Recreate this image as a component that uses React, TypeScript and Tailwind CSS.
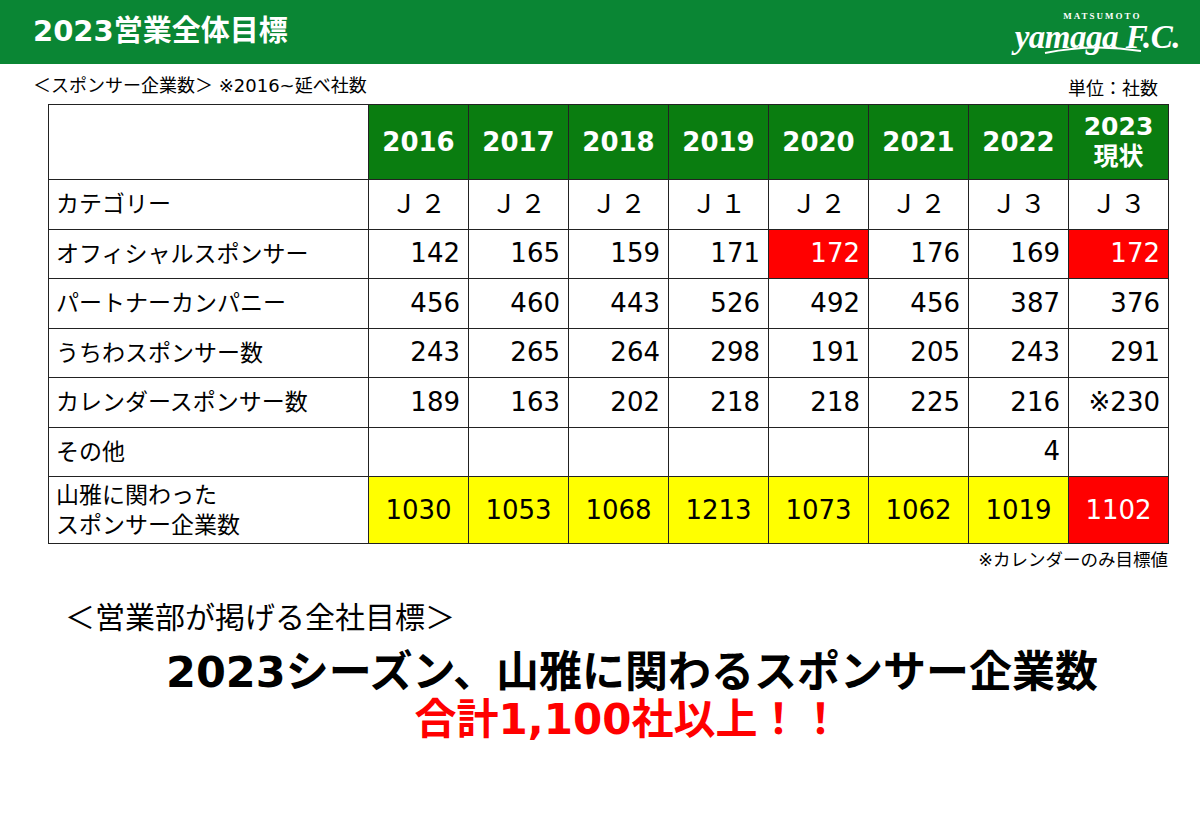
const FONT = '"DejaVu Sans","Noto Sans CJK JP",sans-serif';

type Cell = { v: string; tone?: 'red' | 'yellow' };

const YEARS = ['2016', '2017', '2018', '2019', '2020', '2021', '2022'];

const ROWS: { label: string[]; cells: Cell[]; align: 'right' | 'center'; tall?: boolean }[] = [
  {
    label: ['カテゴリー'],
    align: 'center',
    cells: ['Ｊ２', 'Ｊ２', 'Ｊ２', 'Ｊ１', 'Ｊ２', 'Ｊ２', 'Ｊ３', 'Ｊ３'].map((v) => ({ v })),
  },
  {
    label: ['オフィシャルスポンサー'],
    align: 'right',
    cells: [
      { v: '142' }, { v: '165' }, { v: '159' }, { v: '171' },
      { v: '172', tone: 'red' }, { v: '176' }, { v: '169' }, { v: '172', tone: 'red' },
    ],
  },
  {
    label: ['パートナーカンパニー'],
    align: 'right',
    cells: ['456', '460', '443', '526', '492', '456', '387', '376'].map((v) => ({ v })),
  },
  {
    label: ['うちわスポンサー数'],
    align: 'right',
    cells: ['243', '265', '264', '298', '191', '205', '243', '291'].map((v) => ({ v })),
  },
  {
    label: ['カレンダースポンサー数'],
    align: 'right',
    cells: ['189', '163', '202', '218', '218', '225', '216', '※230'].map((v) => ({ v })),
  },
  {
    label: ['その他'],
    align: 'right',
    cells: ['', '', '', '', '', '', '4', ''].map((v) => ({ v })),
  },
  {
    label: ['山雅に関わった', 'スポンサー企業数'],
    align: 'center',
    tall: true,
    cells: [
      { v: '1030', tone: 'yellow' }, { v: '1053', tone: 'yellow' }, { v: '1068', tone: 'yellow' },
      { v: '1213', tone: 'yellow' }, { v: '1073', tone: 'yellow' }, { v: '1062', tone: 'yellow' },
      { v: '1019', tone: 'yellow' }, { v: '1102', tone: 'red' },
    ],
  },
];

function Logo() {
  return (
    <div className="relative flex flex-col items-center text-white leading-none">
      <span
        className="text-[9px] leading-[10px] font-bold tracking-[2px] ml-[10px]"
        style={{ fontFamily: '"Liberation Serif",serif' }}
      >
        MATSUMOTO
      </span>
      <span
        className="text-[33px] font-bold italic tracking-[-0.5px] leading-[32px]"
        style={{ fontFamily: '"Liberation Serif",serif' }}
      >
        yamaga F.C.
      </span>
      <svg className="absolute left-[28px] bottom-[-2px]" width="100" height="10" viewBox="0 0 100 10">
        <path d="M2 8 Q50 -2 98 6" stroke="white" strokeWidth="2" fill="none" />
      </svg>
    </div>
  );
}

export default function App() {
  return (
    <div className="w-[1200px] h-[831px] bg-white text-black overflow-hidden" style={{ fontFamily: FONT }}>
      {/* Header */}
      <div className="h-[64px] bg-[#0a8634] flex items-center justify-between pl-[33px] pr-[20px]">
        <h1 className="text-white text-[29px] font-bold">2023営業全体目標</h1>
        <Logo />
      </div>

      {/* Sub heading */}
      <div className="h-[40px] flex items-end justify-between pl-[33px] pr-[42px] pb-[5px]">
        <span className="text-[18px]">＜スポンサー企業数＞ ※2016~延べ社数</span>
        <span className="text-[18px] translate-y-[3px]">単位：社数</span>
      </div>

      {/* Table */}
      <div className="pl-[48px]">
        <table className="table-fixed border-collapse w-[1120px] text-[26px]">
          <colgroup>
            <col className="w-[320px]" />
            {Array.from({ length: 8 }).map((_, i) => (
              <col key={i} className="w-[100px]" />
            ))}
          </colgroup>
          <thead>
            <tr className="h-[75px]">
              <th className="border border-[#222] bg-white" />
              {YEARS.map((y) => (
                <th key={y} className="border border-[#222] bg-[#0a7d10] text-white text-[26px] font-bold">
                  {y}
                </th>
              ))}
              <th className="border border-[#222] bg-[#0a7d10] text-white text-[25px] font-bold leading-[30px]">
                2023
                <br />
                現状
              </th>
            </tr>
          </thead>
          <tbody>
            {ROWS.map((row, ri) => (
              <tr key={ri} className={row.tall ? 'h-[67px]' : 'h-[49.5px]'}>
                <td className="border border-[#222] pl-[7px] text-left text-[23px] leading-[30px]">
                  {row.label.map((l, li) => (
                    <div key={li}>{l}</div>
                  ))}
                </td>
                {row.cells.map((c, ci) => (
                  <td
                    key={ci}
                    className={`border border-[#222] ${
                      row.align === 'right' ? 'text-right pr-[8px]' : 'text-center'
                    } ${c.tone === 'red' ? 'bg-[#ff0000] text-white' : c.tone === 'yellow' ? 'bg-[#ffff00]' : ''} ${
                      ri === 0 ? 'tracking-[3px] pl-[3px]' : ''
                    }`}
                  >
                    {c.v}
                  </td>
                ))}
              </tr>
            ))}
          </tbody>
        </table>
        <div className="w-[1120px] text-right text-[17.5px] mt-[3px]">※カレンダーのみ目標値</div>
      </div>

      {/* Goal */}
      <div className="pl-[65px] mt-[22px] text-[30px]">＜営業部が掲げる全社目標＞</div>
      <div className="flex flex-col items-center mt-[6px] leading-[52px]">
        <div className="text-[43px] font-bold translate-x-[32px]">2023シーズン、山雅に関わるスポンサー企業数</div>
        <div className="text-[42px] font-bold text-[#ff0000] -mt-[4px] translate-x-[28px]">合計1,100社以上！！</div>
      </div>
    </div>
  );
}
